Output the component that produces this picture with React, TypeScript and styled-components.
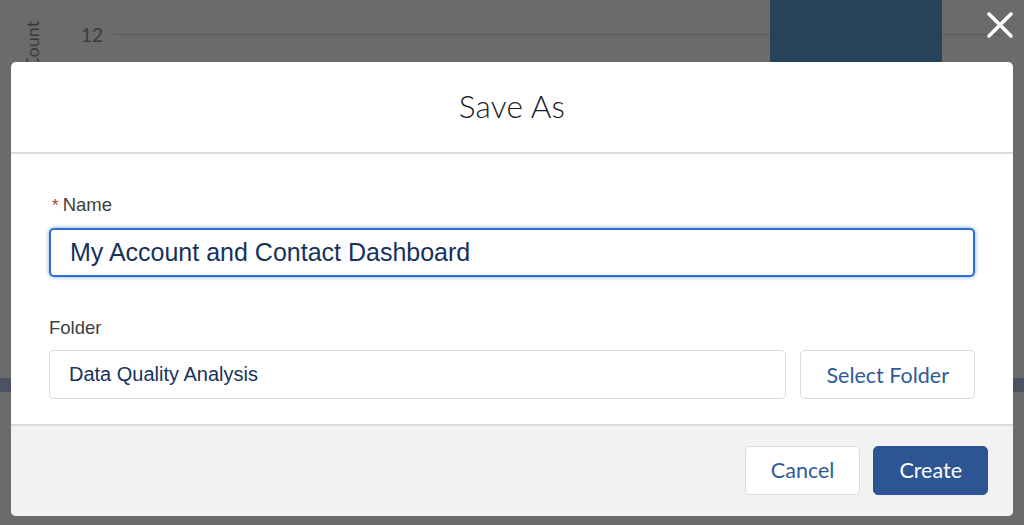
import React from 'react';
import styled, { createGlobalStyle } from 'styled-components';

const GlobalStyle = createGlobalStyle`
	html, body {
		margin: 0;
		padding: 0;
		background: #6b6b6b;
	}
	* {
		box-sizing: border-box;
	}
`;

export default function App() {
	return (
		<>
			<GlobalStyle />
			<Page>
				<ChartBackdrop aria-hidden>
					<AxisTitle>Count</AxisTitle>
					<TickLabel>12</TickLabel>
					<GridLine />
					<Bar />
					<Strip />
				</ChartBackdrop>

				<CloseButton aria-label="Close">
					<svg width="28" height="28" viewBox="0 0 28 28">
						<path d="M3 3 L25 25 M25 3 L3 25" stroke="#fff" strokeWidth="3.6" strokeLinecap="round" />
					</svg>
				</CloseButton>

				<Modal>
					<Header>
						<Title>Save As</Title>
					</Header>
					<Body>
						<Field>
							<Label>
								<Required>*</Required>Name
							</Label>
							<TextInput $focused defaultValue="My Account and Contact Dashboard" $size={25} />
						</Field>
						<Field>
							<Label>Folder</Label>
							<FolderRow>
								<TextInput defaultValue="Data Quality Analysis" $size={20} readOnly />
								<Button $variant="neutral">Select Folder</Button>
							</FolderRow>
						</Field>
					</Body>
					<Footer>
						<Button $variant="neutral">Cancel</Button>
						<Button $variant="brand">Create</Button>
					</Footer>
				</Modal>
			</Page>
		</>
	);
}

const Page = styled.div`
	position: relative;
	width: 1024px;
	height: 525px;
	overflow: hidden;
	background: #6b6b6b;
	padding: 62px 11px 9px;
`;

const ChartBackdrop = styled.div`
	position: absolute;
	inset: 0;
	pointer-events: none;
`;

const AxisTitle = styled.div`
	position: absolute;
	left: 8px;
	top: 34px;
	transform: rotate(-90deg);
	transform-origin: center;
	font-family: 'Lato', sans-serif;
	font-size: 18px;
	color: #3b3b3b;
`;

const TickLabel = styled.div`
	position: absolute;
	left: 81px;
	top: 23px;
	font-family: 'Lato', sans-serif;
	font-size: 19px;
	color: #3b3b3b;
`;

const GridLine = styled.div`
	position: absolute;
	left: 114px;
	right: 24px;
	top: 34px;
	height: 1px;
	background: #5b5b5b;
`;

const Bar = styled.div`
	position: absolute;
	left: 770px;
	width: 172px;
	top: 0;
	height: 62px;
	background: #26435a;
`;

const Strip = styled.div`
	position: absolute;
	left: 0;
	right: 0;
	top: 378px;
	height: 14px;
	background: #4b5261;
`;

const CloseButton = styled.button`
	position: absolute;
	top: 11px;
	right: 10px;
	width: 28px;
	height: 28px;
	padding: 0;
	border: 0;
	background: transparent;
	display: flex;
	cursor: pointer;
`;

const Modal = styled.div`
	position: relative;
	height: 454px;
	background: #fff;
	border-radius: 5px;
	display: flex;
	flex-direction: column;
	overflow: hidden;
`;

const Header = styled.div`
	height: 92px;
	border-bottom: 2px solid #dddbda;
	display: flex;
	align-items: center;
	justify-content: center;
	padding-bottom: 2px;
`;

const Title = styled.h2`
	margin: 0;
	font-family: 'Lato', sans-serif;
	font-weight: 300;
	font-size: 31.5px;
	color: #16191c;
	letter-spacing: 0.2px;
`;

const Body = styled.div`
	flex: 1;
	padding: 40px 38px 0;
	display: flex;
	flex-direction: column;
	gap: 40px;
`;

const Field = styled.div`
	display: flex;
	flex-direction: column;
	gap: 11px;
`;

const Label = styled.label`
	font-family: 'Liberation Sans', Arial, sans-serif;
	font-size: 18.5px;
	line-height: 22px;
	color: #3e3e3c;
	display: flex;
	align-items: baseline;
`;

const Required = styled.span`
	color: #c23934;
	font-size: 17px;
	margin: 0 4px 0 3px;
`;

const TextInput = styled.input<{ $focused?: boolean; $size: number }>`
	flex: 1 1 auto;
	min-width: 0;
	height: 49px;
	padding: 0 19px;
	border-radius: 5px;
	font-family: 'Liberation Sans', Arial, sans-serif;
	font-size: ${p => p.$size}px;
	color: #16325c;
	background: #fff;
	outline: none;
	border: ${p => (p.$focused ? '2px solid #2e6ed3' : '1.5px solid #dddbda')};
	box-shadow: ${p => (p.$focused ? '0 0 4px #7aa7e8' : 'none')};
`;

const FolderRow = styled.div`
	display: flex;
	gap: 14px;
`;

const Button = styled.button<{ $variant: 'neutral' | 'brand' }>`
	height: 49px;
	padding: 0 25px;
	border-radius: 5px;
	font-family: 'Lato', sans-serif;
	font-size: 21.5px;
	cursor: pointer;
	border: 1.5px solid ${p => (p.$variant === 'brand' ? '#2d5593' : '#dddbda')};
	background: ${p => (p.$variant === 'brand' ? '#2d5593' : '#fff')};
	color: ${p => (p.$variant === 'brand' ? '#fff' : '#2f5a9a')};
`;

const Footer = styled.div`
	height: 92px;
	border-top: 2px solid #dddbda;
	background: #f3f2f2;
	display: flex;
	justify-content: flex-end;
	align-items: center;
	gap: 13px;
	padding: 0 25px 2px;
`;
